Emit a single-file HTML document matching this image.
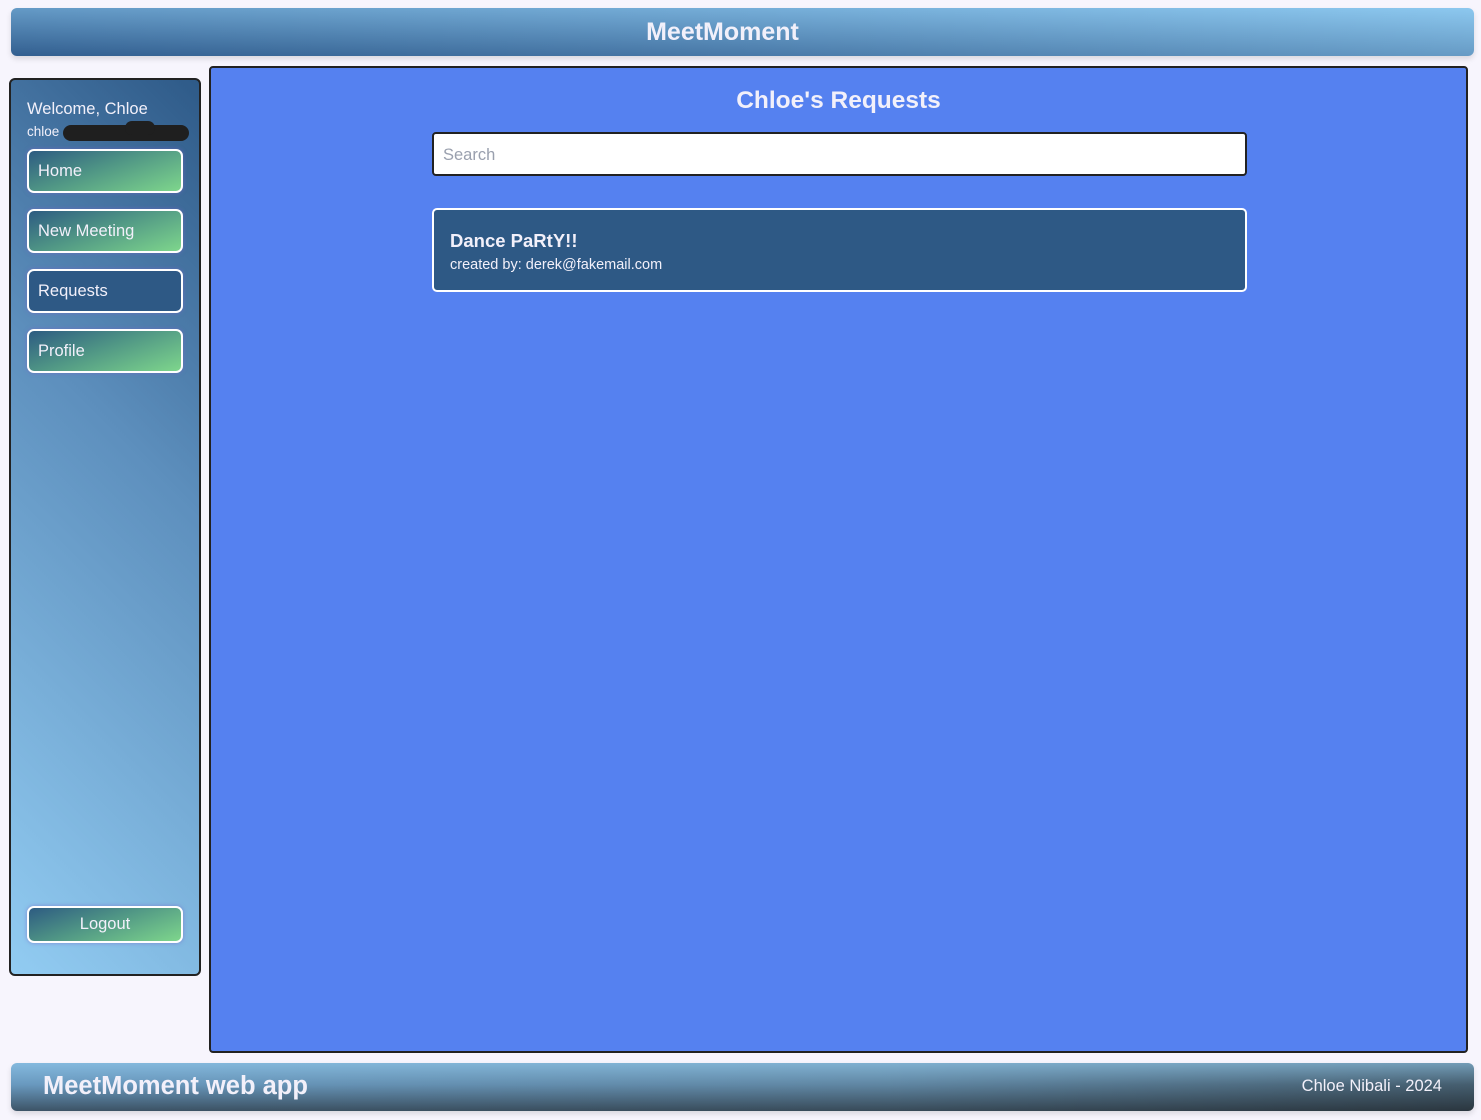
<!DOCTYPE html>
<html><head><meta charset="utf-8"><style>
*{box-sizing:border-box;margin:0;padding:0}
body{width:1481px;height:1120px;background:#f7f5fd;font-family:"Liberation Sans",sans-serif;color:#f2f0fa;position:relative;overflow:hidden}
.hdr{position:absolute;left:11px;top:8px;width:1463px;height:48px;border-radius:6px;background:linear-gradient(180deg,rgba(140,200,240,.5) 0%,rgba(30,70,120,.35) 100%),linear-gradient(90deg,#3d6c9c 0%,#5f93c0 50%,#8dc8ee 100%);box-shadow:0 3px 6px rgba(0,0,0,.12);text-align:center;font-weight:bold;font-size:25px;line-height:48px;padding-right:40px}
.side{position:absolute;left:9px;top:78px;width:192px;height:898px;border:2px solid #222;border-radius:6px;background:linear-gradient(225deg,#2e5a88 0%,#5d8fbd 40%,#92ccf2 100%)}
.wel{position:absolute;left:16px;top:20px;font-size:16.5px}
.em{position:absolute;left:16px;top:44px;font-size:13.5px}
.blk{position:absolute;left:52px;top:45px;width:126px;height:16px;border-radius:8px;background:#1f1f1f}
.blk2{position:absolute;left:114px;top:41px;width:30px;height:14px;border-radius:7px;background:#1f1f1f}
.btn{position:absolute;left:16px;width:156px;height:44px;border:2px solid #fff;border-radius:7px;box-shadow:0 0 4px rgba(120,100,200,.6);font-size:16.5px;line-height:40px;padding-left:9px}
.g{background:linear-gradient(160deg,#2d5b82 0%,#4f9585 45%,#7ed68c 100%)}
.d{background:#2e5985}
.main{position:absolute;left:209px;top:66px;width:1259px;height:987px;border:2px solid #222;border-radius:4px;background:#5581f0}
h1{position:absolute;left:0;width:100%;top:19px;text-align:center;font-size:24.5px}
.srch{position:absolute;left:221px;top:64px;width:815px;height:44px;background:#fff;border:2px solid #222;border-radius:4px;color:#9aa0ae;font-size:16.5px;line-height:42px;padding-left:9px}
.card{position:absolute;left:221px;top:140px;width:815px;height:84px;background:#2e5985;border:2px solid #fff;border-radius:5px;padding:20px 16px}
.card b{display:block;font-size:18.5px}
.card span{display:block;font-size:14.5px;margin-top:5px}
.ftr{position:absolute;left:11px;top:1063px;width:1463px;height:48px;border-radius:6px;background:linear-gradient(180deg,rgba(150,205,240,.6) 0%,rgba(100,140,170,.2) 45%,rgba(30,35,40,.6) 100%),linear-gradient(90deg,#6a9cc4 0%,#5e84a0 60%,#3d5260 100%);box-shadow:0 3px 6px rgba(0,0,0,.12)}
.ftr .l{position:absolute;left:32px;top:9px;font-size:25.5px;font-weight:bold}
.ftr .r{position:absolute;right:32px;top:14px;font-size:16.5px}
</style></head><body>
<div class="hdr">MeetMoment</div>
<div class="side">
<div class="wel">Welcome, Chloe</div>
<div class="em">chloe</div><div class="blk"></div><div class="blk2"></div>
<div class="btn g" style="top:69px">Home</div>
<div class="btn g" style="top:129px">New Meeting</div>
<div class="btn d" style="top:189px">Requests</div>
<div class="btn g" style="top:249px">Profile</div>
<div class="btn g" style="top:826px;height:37px;line-height:33px;text-align:center;padding:0">Logout</div>
</div>
<div class="main">
<h1>Chloe's Requests</h1>
<div class="srch">Search</div>
<div class="card"><b>Dance PaRtY!!</b><span>created by: derek@fakemail.com</span></div>
</div>
<div class="ftr"><div class="l">MeetMoment web app</div><div class="r">Chloe Nibali - 2024</div></div>
</body></html>
